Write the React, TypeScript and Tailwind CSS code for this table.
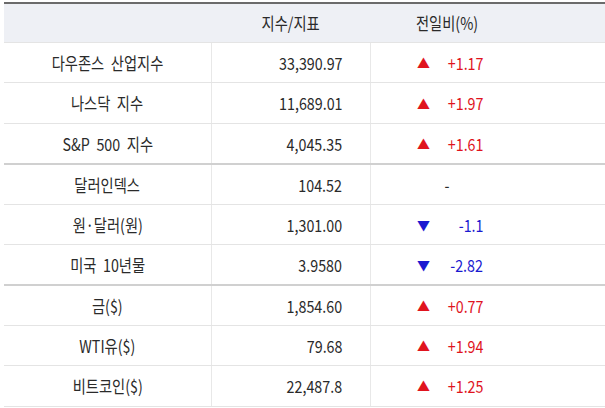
import React from "react";

interface Row {
  name: string;
  value: string;
  change: string;
  dir: "up" | "down" | "none";
  groupEnd?: boolean;
}

const rows: Row[] = [
  { name: "다우존스 산업지수", value: "33,390.97", change: "+1.17", dir: "up" },
  { name: "나스닥 지수", value: "11,689.01", change: "+1.97", dir: "up" },
  { name: "S&P 500 지수", value: "4,045.35", change: "+1.61", dir: "up", groupEnd: true },
  { name: "달러인덱스", value: "104.52", change: "-", dir: "none" },
  { name: "원·달러(원)", value: "1,301.00", change: "-1.1", dir: "down" },
  { name: "미국 10년물", value: "3.9580", change: "-2.82", dir: "down", groupEnd: true },
  { name: "금($)", value: "1,854.60", change: "+0.77", dir: "up" },
  { name: "WTI유($)", value: "79.68", change: "+1.94", dir: "up" },
  { name: "비트코인($)", value: "22,487.8", change: "+1.25", dir: "up" },
];

// the source text is a little condensed, so squeeze glyphs horizontally
function Txt({ children, origin = "origin-center" }: { children: React.ReactNode; origin?: string }) {
  return <span className={`inline-block whitespace-pre scale-x-[0.84] ${origin}`}>{children}</span>;
}

function Change({ row }: { row: Row }) {
  if (row.dir === "none") {
    return (
      <div className="w-[152px] text-center text-[#2a2a2a]">
        <Txt>-</Txt>
      </div>
    );
  }
  const up = row.dir === "up";
  return (
    <div className={`w-[152px] flex items-center ${up ? "text-[#e0141e]" : "text-[#1a1ad0]"}`}>
      <span className="ml-[46px] text-[13px] leading-none">{up ? "▲" : "▼"}</span>
      <span className="ml-auto mr-[40px]">
        <Txt origin="origin-right">{row.change}</Txt>
      </span>
    </div>
  );
}

export default function App() {
  return (
    <div
      className="w-[605px] h-[408px] bg-white overflow-hidden pt-[2px] pl-[4px] text-[17px] text-[#2a2a2a] [word-spacing:4px]"
      style={{ fontFamily: '"Noto Sans CJK KR", "Noto Sans", sans-serif' }}
    >
      <div className="border-t-2 border-[#6b6b6b]">
        {/* Header */}
        <div className="grid grid-cols-[207px_160px_1fr] h-[38px] bg-[#eef0f5] items-center">
          <div />
          <div className="text-center">
            <Txt>지수/지표</Txt>
          </div>
          <div className="w-[152px] text-center">
            <Txt>전일비(%)</Txt>
          </div>
        </div>

        {rows.map((row, i) => (
          <div
            key={row.name}
            className={`grid grid-cols-[207px_160px_1fr] h-[40.4px] items-center ${
              i > 0 && rows[i - 1].groupEnd ? "border-t-2 border-[#d0d0d0]" : "border-t border-[#e4e4e4]"
            }`}
          >
            <div className="text-center">
              <Txt>{row.name}</Txt>
            </div>
            <div className="h-full flex items-center justify-end pr-[28px] border-x border-[#e8e8e8]">
              <Txt origin="origin-right">{row.value}</Txt>
            </div>
            <Change row={row} />
          </div>
        ))}
        <div className="border-t border-[#e4e4e4]" />
      </div>
    </div>
  );
}
